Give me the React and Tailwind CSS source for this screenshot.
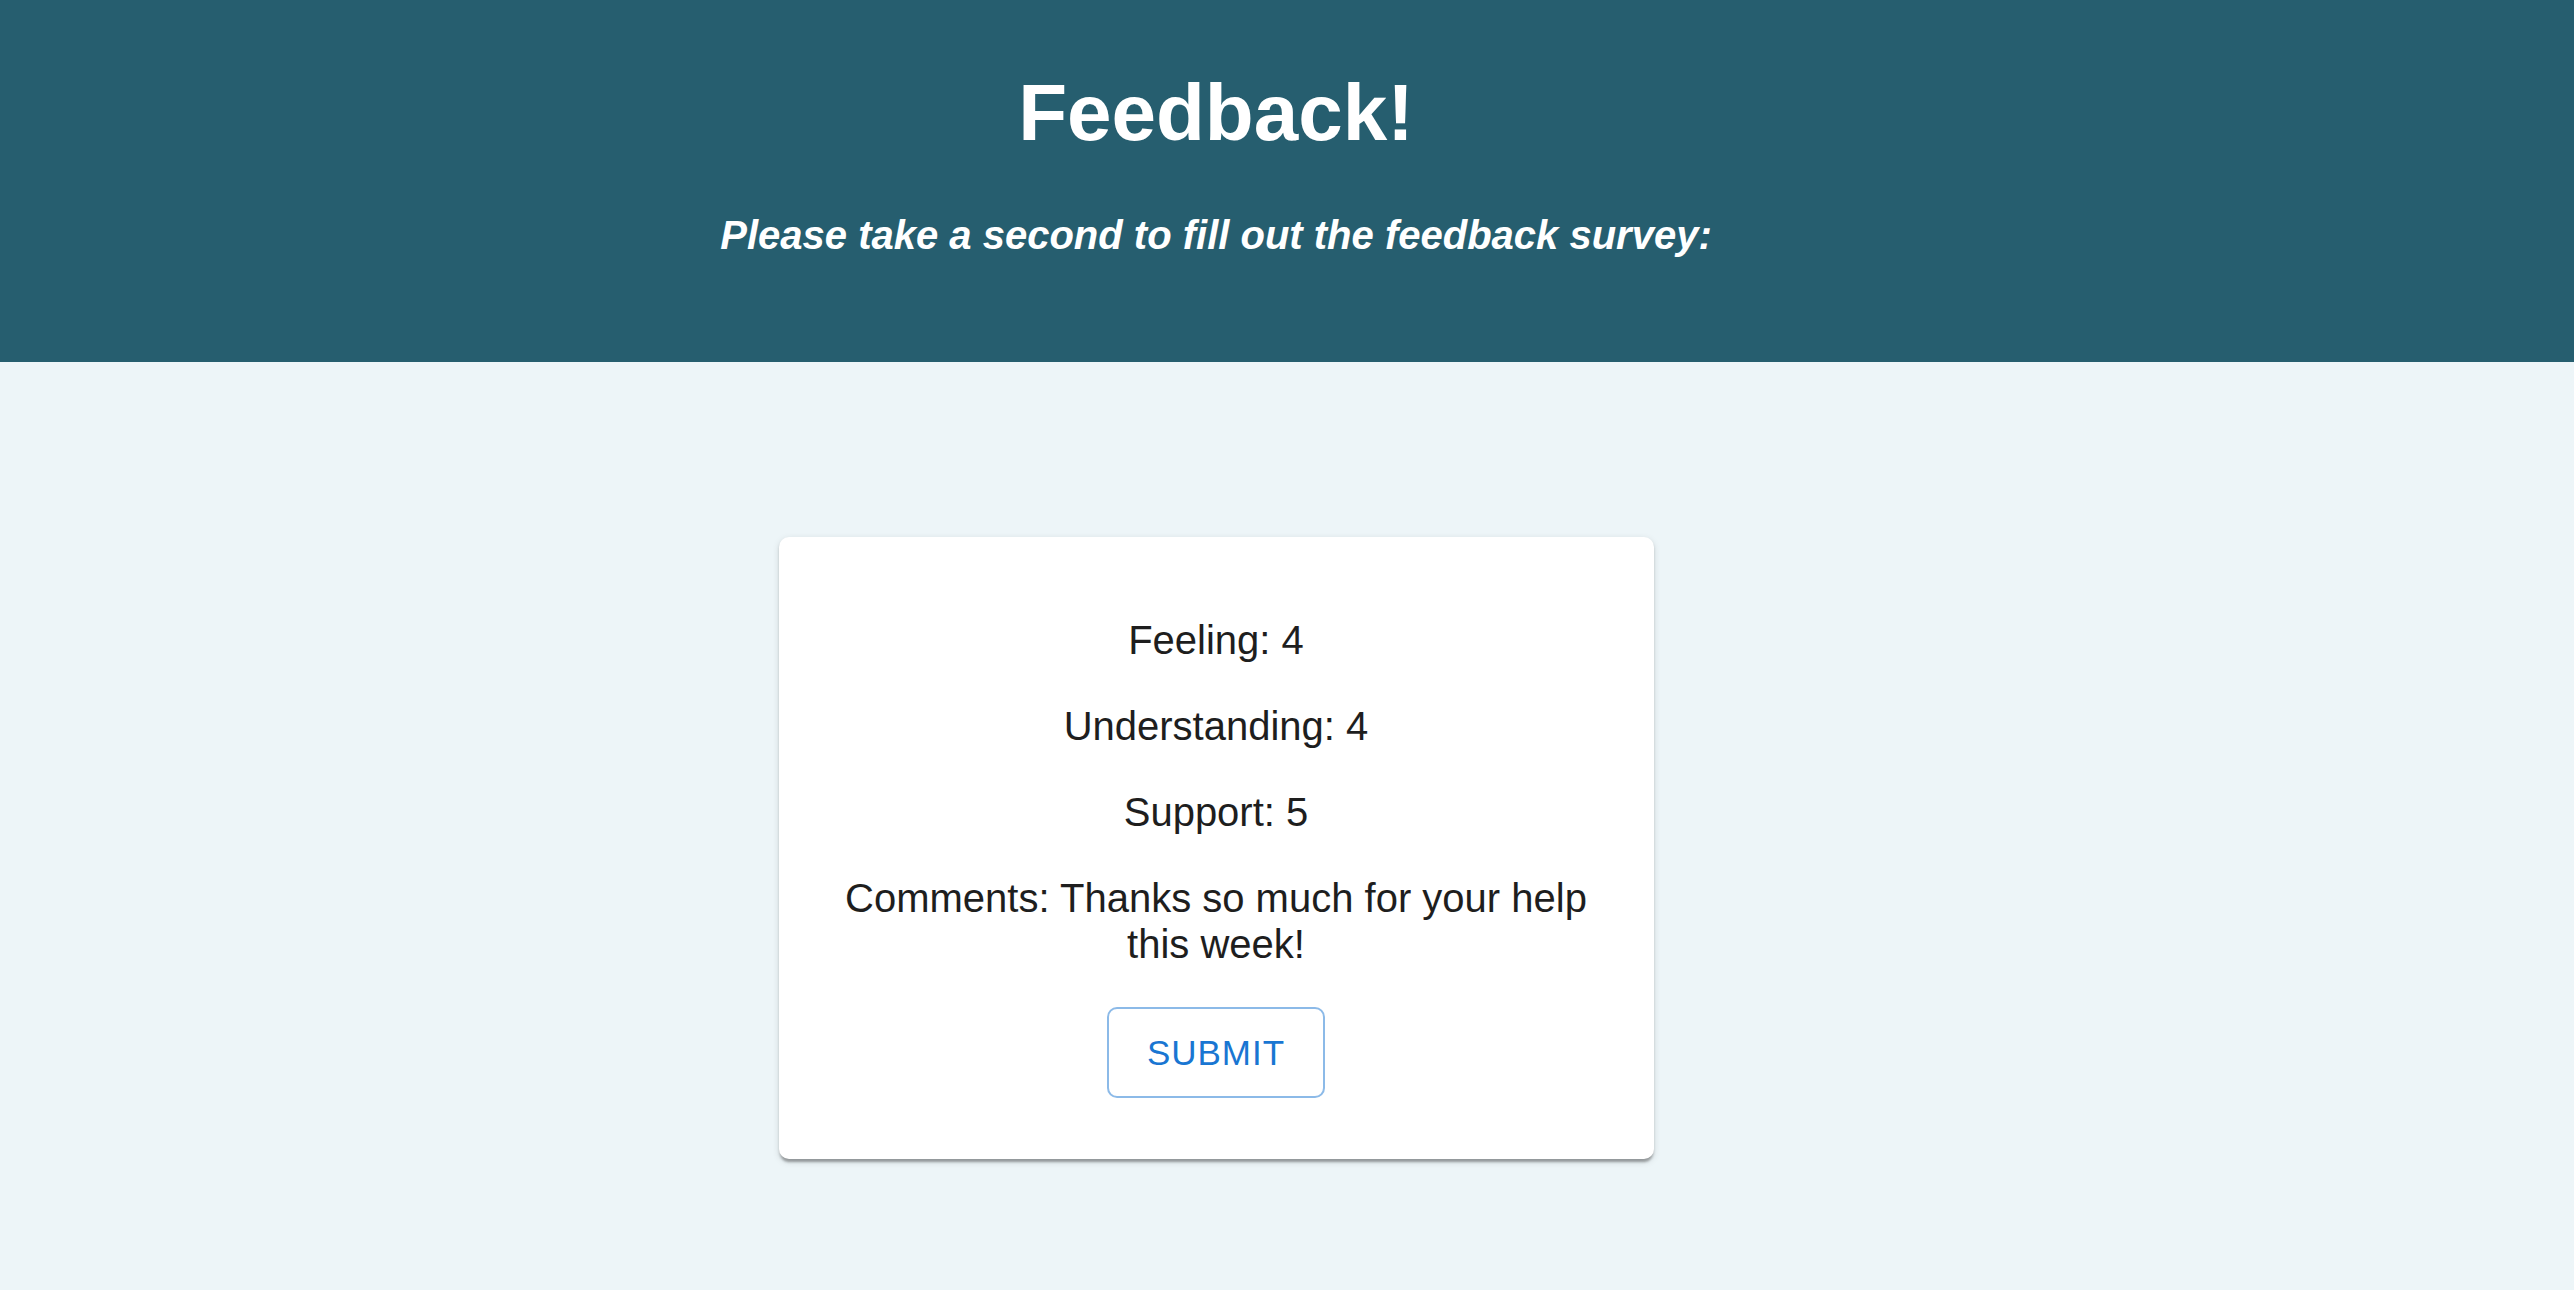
export default function App() {
  const font = { fontFamily: '"Liberation Sans", Arial, Helvetica, sans-serif' };
  return (
    <div className="min-h-[1290px] bg-[#edf5f8] flex flex-col" style={font}>
      <header className="bg-[#265e6f] text-white">
        <div className="pr-[142px] pt-[67px] pb-[104px] text-center">
          <h1 className="text-[80px] leading-[92px] font-bold">Feedback!</h1>
          <p className="mt-[53px] text-[40px] leading-[46px] font-bold italic">
            Please take a second to fill out the feedback survey:
          </p>
        </div>
      </header>
      <main className="pr-[142px] pt-[175px] flex justify-center">
        <div className="w-[875px] bg-white rounded-[10px] px-[40px] pt-[40px] pb-[61px] text-center text-[#1e1e1e] shadow-[0_5px_2.5px_-2.5px_rgba(0,0,0,0.2),0_2.5px_2.5px_0_rgba(0,0,0,0.14),0_2.5px_7.5px_0_rgba(0,0,0,0.12)]">
          <p className="my-[40px] text-[40px] leading-[46px]">Feeling: 4</p>
          <p className="my-[40px] text-[40px] leading-[46px]">Understanding: 4</p>
          <p className="my-[40px] text-[40px] leading-[46px]">Support: 5</p>
          <p className="my-[40px] text-[40px] leading-[46px]">
            Comments: Thanks so much for your help this week!
          </p>
          <button className="border-[2.5px] border-[rgba(25,118,210,0.5)] rounded-[10px] px-[37.5px] py-[12.5px] text-[35px] leading-[62px] tracking-[1px] text-[#1976d2] uppercase bg-white">
            Submit
          </button>
        </div>
      </main>
    </div>
  );
}
